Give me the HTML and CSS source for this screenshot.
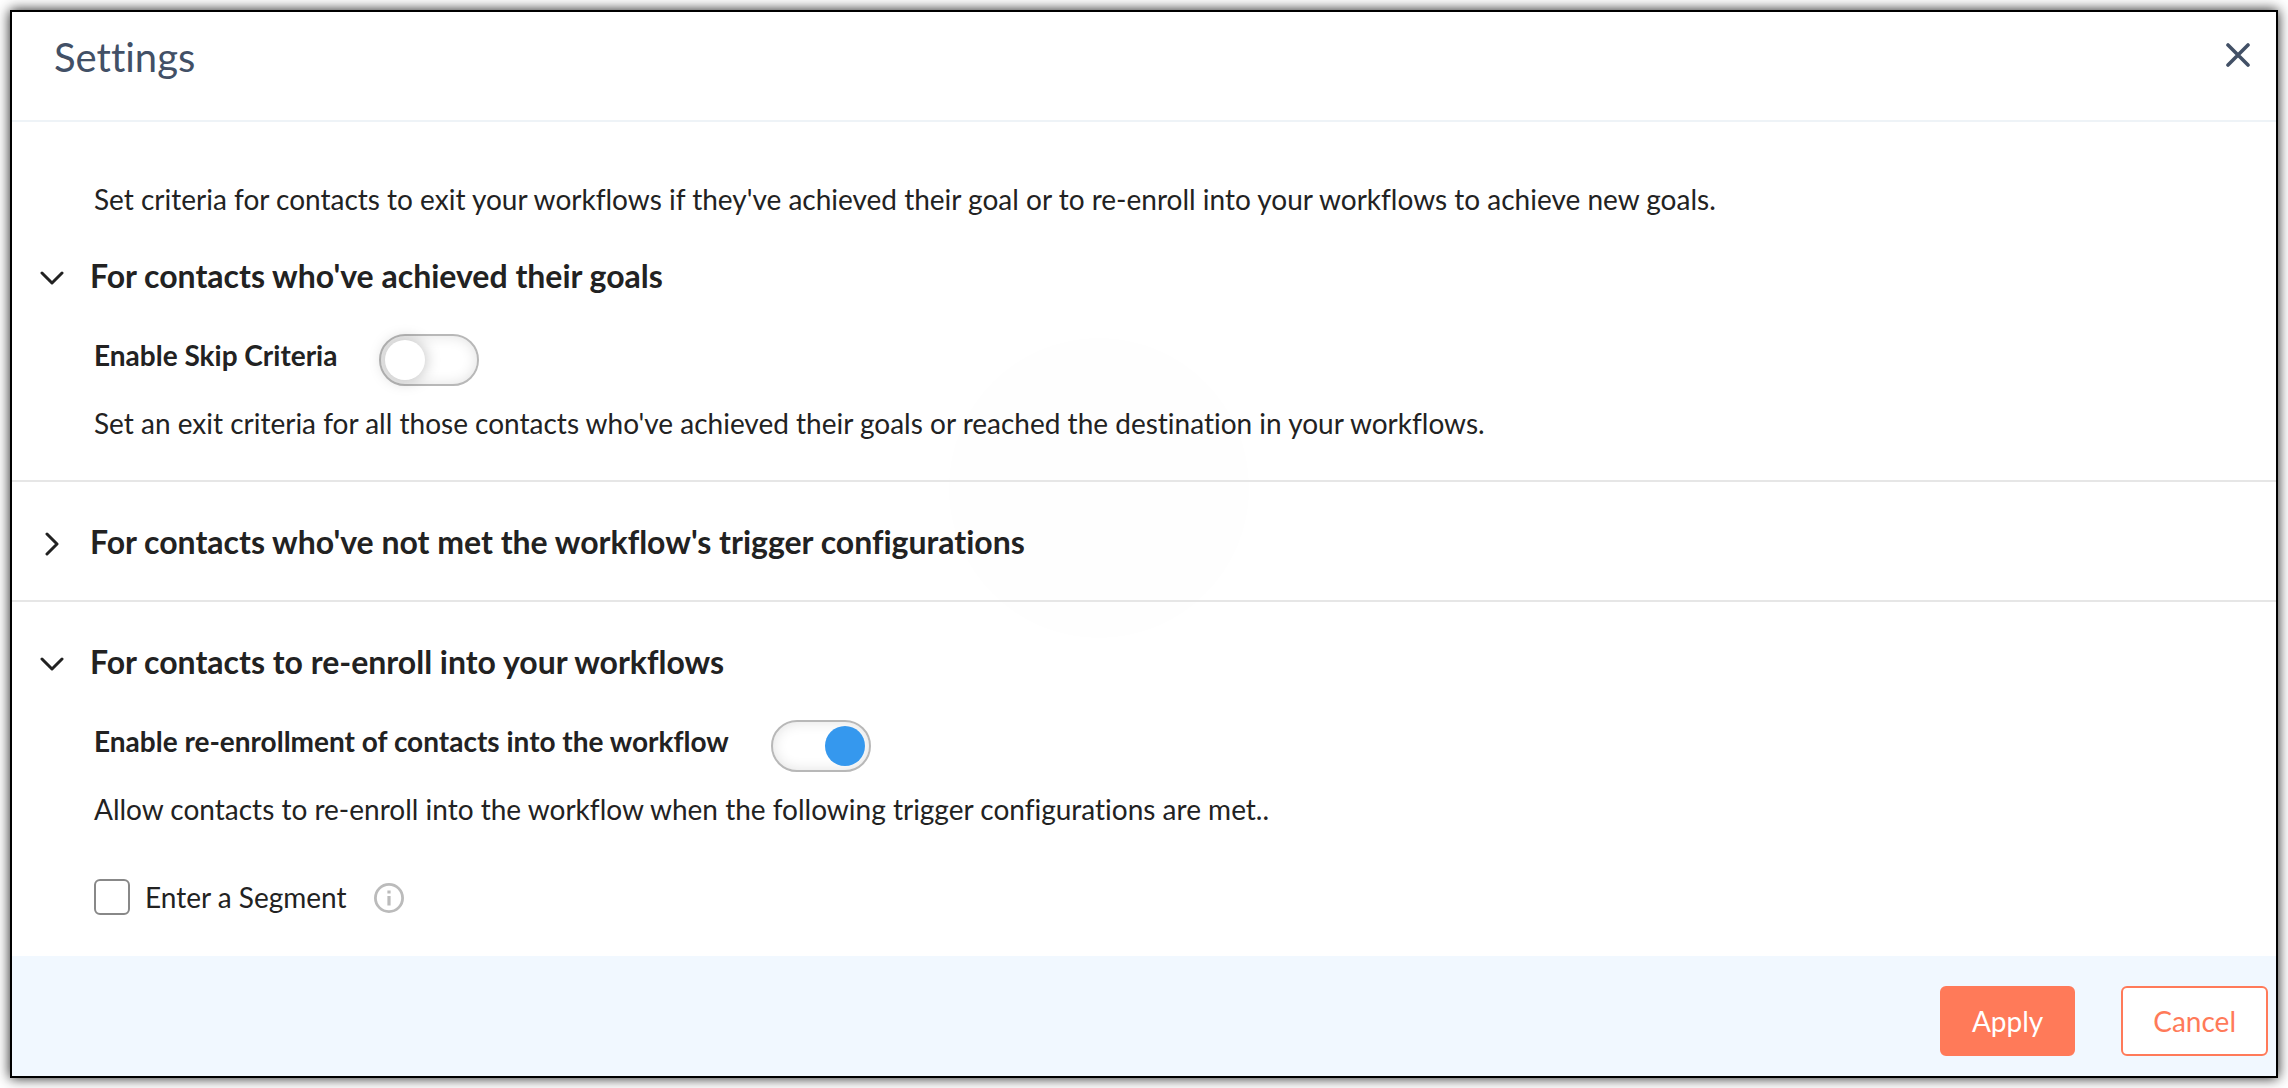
FILE: index.html
```html
<!DOCTYPE html>
<html lang="en">
<head>
  <meta charset="UTF-8">
  <title>Settings</title>
  <meta name="viewport" content="width=device-width, initial-scale=1.0">
  <link rel="stylesheet" href="styles.css">
</head>
<body>

  <div class="modal" role="dialog" aria-labelledby="modalTitle">
    <div class="backdrop-node" aria-hidden="true"></div>

    <header class="modal-header">
      <h1 id="modalTitle">Settings</h1>
      <button class="close-btn" type="button" aria-label="Close">
        <svg width="24" height="24" viewBox="0 0 24 24" fill="none" stroke="currentColor" stroke-width="3.6" stroke-linecap="round">
          <path d="M2 2L22 22M22 2L2 22"/>
        </svg>
      </button>
    </header>

    <main class="modal-body">
      <p class="intro">Set criteria for contacts to exit your workflows if they've achieved their goal or to re-enroll into your workflows to achieve new goals.</p>

      <details class="section first" open>
        <summary>
          <svg class="chevron" width="24" height="24" viewBox="0 0 24 24" fill="none" stroke="currentColor" stroke-width="3" stroke-linecap="round" stroke-linejoin="round">
            <path d="M7 2L17 12L7 22"/>
          </svg>
          <h2>For contacts who've achieved their goals</h2>
        </summary>
        <div class="section-content">
          <div class="toggle-row">
            <label for="skipCriteria">Enable Skip Criteria</label>
            <input class="toggle" type="checkbox" role="switch" id="skipCriteria">
          </div>
          <p>Set an exit criteria for all those contacts who've achieved their goals or reached the destination in your workflows.</p>
        </div>
      </details>

      <details class="section">
        <summary>
          <svg class="chevron" width="24" height="24" viewBox="0 0 24 24" fill="none" stroke="currentColor" stroke-width="3" stroke-linecap="round" stroke-linejoin="round">
            <path d="M7 2L17 12L7 22"/>
          </svg>
          <h2>For contacts who've not met the workflow's trigger configurations</h2>
        </summary>
      </details>

      <details class="section" open>
        <summary>
          <svg class="chevron" width="24" height="24" viewBox="0 0 24 24" fill="none" stroke="currentColor" stroke-width="3" stroke-linecap="round" stroke-linejoin="round">
            <path d="M7 2L17 12L7 22"/>
          </svg>
          <h2>For contacts to re-enroll into your workflows</h2>
        </summary>
        <div class="section-content">
          <div class="toggle-row">
            <label for="reEnroll">Enable re-enrollment of contacts into the workflow</label>
            <input class="toggle" type="checkbox" role="switch" id="reEnroll" checked>
          </div>
          <p>Allow contacts to re-enroll into the workflow when the following trigger configurations are met..</p>
          <div class="check-row">
            <input class="checkbox" type="checkbox" id="segment">
            <label for="segment">Enter a Segment</label>
            <svg class="info" width="30" height="30" viewBox="0 0 30 30" fill="none" stroke="currentColor">
              <circle cx="15" cy="15" r="13.6" stroke-width="2.8"/>
              <path d="M15 7.5V10.5M15 13V22.5" stroke-width="3.2"/>
            </svg>
          </div>
        </div>
      </details>
    </main>

    <footer class="modal-footer">
      <button class="button primary" type="button">Apply</button>
      <button class="button secondary" type="button">Cancel</button>
    </footer>
  </div>

</body>
</html>
```
FILE: styles.css
```css
* {
  box-sizing: border-box;
}
body {
  margin: 0;
  padding: 10px;
  background: #fff;
  color: #222;
  font-family: Lato, "Liberation Sans", sans-serif;
  font-size: 28px;
  line-height: 40px;
  font-variant-ligatures: none;
}
h1, h2, p {
  margin: 0;
}
.modal {
  position: relative;
  z-index: 0;
  display: flex;
  flex-direction: column;
  min-height: calc(100vh - 20px);
  background: #fff;
  border: 2px solid #000;
  box-shadow: 0 0 12px rgba(0,0,0,0.9);
}
/* workflow node showing faintly through the modal */
.backdrop-node {
  position: absolute;
  z-index: -1;
  top: 326px;
  left: 48%;
  width: 300px;
  height: 300px;
  margin-left: -150px;
  border-radius: 50%;
  background: #fefefe;
}
.modal-header {
  display: flex;
  justify-content: space-between;
  align-items: flex-start;
  padding: 21px 26px 39px 42px;
  border-bottom: 2px solid #eef3f7;
}
.modal-header h1 {
  color: #425066;
  font-size: 40px;
  font-weight: normal;
  line-height: 48px;
}
.close-btn {
  display: flex;
  padding: 10px 0;
  border: none;
  background: none;
  color: #425066;
  cursor: pointer;
}
.modal-body {
  flex: 1;
}
.intro {
  padding: 57px 82px 0;
}
.section {
  padding: 40px 0 37px;
  border-bottom: 2px solid #e6e6e6;
}
.section.first {
  padding-top: 37px;
}
.section:last-child {
  border-bottom: none;
}
.section:not([open]) {
  padding-bottom: 38px;
}
summary {
  display: flex;
  align-items: center;
  gap: 26px;
  padding-left: 28px;
  list-style: none;
  cursor: pointer;
}
summary h2 {
  font-size: 32px;
  line-height: 40px;
}
.chevron {
  margin-top: 4px;
}
.section[open] .chevron {
  transform: rotate(90deg);
}
.section-content {
  padding: 38px 82px 0;
}
.toggle-row {
  display: flex;
  align-items: flex-start;
  gap: 42px;
  margin-bottom: 17px;
  font-weight: bold;
  line-height: 42px;
}
.toggle {
  appearance: none;
  width: 100px;
  height: 52px;
  margin: 0;
  padding: 4px;
  border: 2px solid #b8b8b8;
  border-radius: 26px;
  background: #fff;
  box-shadow: inset 0 0 14px rgba(0,0,0,0.12);
  cursor: pointer;
}
.toggle::before {
  content: "";
  display: block;
  width: 40px;
  height: 40px;
  border-radius: 50%;
  background: #fff;
  box-shadow: 0 0 16px rgba(0,0,0,0.28);
}
.toggle:checked::before {
  margin-left: auto;
  background: #3598ee;
  box-shadow: none;
}
.check-row {
  display: flex;
  align-items: center;
  gap: 15px;
  margin-top: 48px;
}
.checkbox {
  appearance: none;
  width: 36px;
  height: 36px;
  margin: 0;
  border: 2px solid #888;
  border-radius: 6px;
  background: #fff;
}
.info {
  margin: 2px 0 0 12px;
  color: #bbb;
}
.modal-footer {
  display: flex;
  justify-content: flex-end;
  gap: 46px;
  padding: 30px 8px 20px;
  background: #f1f8ff;
}
.button {
  height: 70px;
  padding: 0 30px;
  border: 2px solid #ff7a59;
  border-radius: 6px;
  font-family: inherit;
  font-size: 28px;
  cursor: pointer;
}
.button.primary {
  background: #ff7a59;
  color: #fff;
}
.button.secondary {
  background: #fff;
  color: #ff7a59;
}
```
